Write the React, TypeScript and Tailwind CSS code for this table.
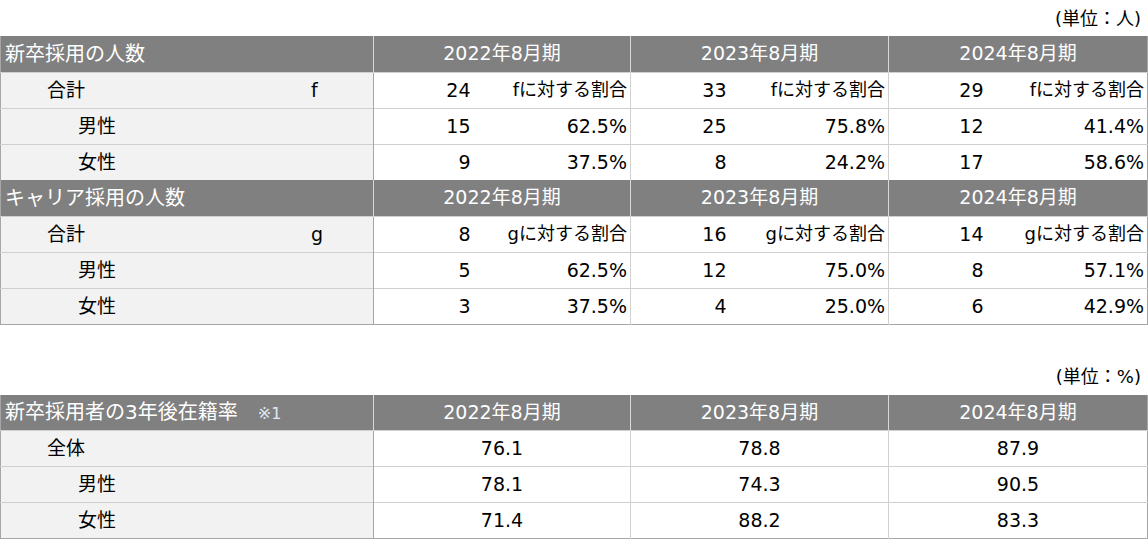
const font = { fontFamily: '"DejaVu Sans", "Noto Sans CJK JP", sans-serif' };

type CountRow = { label: string; indent: "total" | "sub"; mark?: string; values: [string, string][] };

const years = ["2022年8月期", "2023年8月期", "2024年8月期"];

const newGrad: CountRow[] = [
  { label: "合計", indent: "total", mark: "f", values: [["24", "fに対する割合"], ["33", "fに対する割合"], ["29", "fに対する割合"]] },
  { label: "男性", indent: "sub", values: [["15", "62.5%"], ["25", "75.8%"], ["12", "41.4%"]] },
  { label: "女性", indent: "sub", values: [["9", "37.5%"], ["8", "24.2%"], ["17", "58.6%"]] },
];

const career: CountRow[] = [
  { label: "合計", indent: "total", mark: "g", values: [["8", "gに対する割合"], ["16", "gに対する割合"], ["14", "gに対する割合"]] },
  { label: "男性", indent: "sub", values: [["5", "62.5%"], ["12", "75.0%"], ["8", "57.1%"]] },
  { label: "女性", indent: "sub", values: [["3", "37.5%"], ["4", "25.0%"], ["6", "42.9%"]] },
];

const retention = [
  { label: "全体", indent: "total", values: ["76.1", "78.8", "87.9"] },
  { label: "男性", indent: "sub", values: ["78.1", "74.3", "90.5"] },
  { label: "女性", indent: "sub", values: ["71.4", "88.2", "83.3"] },
];

// ─── Pieces ──────────────────────────────────────────────────────────────────

function HeaderRow({ title, note, split }: { title: string; note?: string; split: boolean }) {
  return (
    <tr className="h-9 bg-[#808080] text-white">
      <td className="border-r border-[#d9d9d9] pl-1 text-left whitespace-nowrap text-[20px]">
        {title}
        {note && <span className="ml-[20px] text-[16px] text-[#dfe8f4]">{note}</span>}
      </td>
      {years.map((y, i) => (
        <td
          key={y}
          colSpan={split ? 2 : 1}
          className={`text-center ${i < 2 ? "border-r border-[#d9d9d9]" : ""}`}
        >
          {y}
        </td>
      ))}
    </tr>
  );
}

function LabelCell({ label, indent, mark }: { label: string; indent: string; mark?: string }) {
  return (
    <td className="bg-[#f2f2f2] border-r border-[#a6a6a6] border-t border-t-[#d0d0d0]">
      <div className="flex items-center">
        <span className={indent === "total" ? "pl-[46px] w-[310px]" : "pl-[77px]"}>{label}</span>
        {mark && <span>{mark}</span>}
      </div>
    </td>
  );
}

function CountRows({ rows }: { rows: CountRow[] }) {
  return (
    <>
      {rows.map(r => (
        <tr key={r.label} className="h-9">
          <LabelCell label={r.label} indent={r.indent} mark={r.mark} />
          {r.values.map(([n, p], i) => (
            <>
              <td key={`n${i}`} className="border-t border-[#d0d0d0] text-right pr-[3px]">
                {n}
              </td>
              <td
                key={`p${i}`}
                className={`border-t border-[#d0d0d0] text-right pr-[3px] whitespace-nowrap ${
                  i < 2 ? "border-r" : ""
                } ${p.includes("割合") ? "text-[18px]" : ""}`}
              >
                {p}
              </td>
            </>
          ))}
        </tr>
      ))}
    </>
  );
}

// ─── App ─────────────────────────────────────────────────────────────────────

export default function App() {
  return (
    <div className="w-[1148px] h-[541px] bg-white text-black text-[19px] leading-none" style={font}>
      <div className="h-[36px] flex items-center justify-end pr-[7px] text-[18px] pt-[1px]">(単位：人)</div>
      <table className="w-[1147px] table-fixed border-collapse border-b border-l border-r border-[#a6a6a6]">
        <colgroup>
          <col className="w-[373px]" />
          <col className="w-[100px]" />
          <col className="w-[157px]" />
          <col className="w-[99px]" />
          <col className="w-[159px]" />
          <col className="w-[98px]" />
          <col className="w-[161px]" />
        </colgroup>
        <tbody>
          <HeaderRow title="新卒採用の人数" split />
          <CountRows rows={newGrad} />
          <HeaderRow title="キャリア採用の人数" split />
          <CountRows rows={career} />
        </tbody>
      </table>

      <div className="h-[70px] flex items-end justify-end pr-[7px] pb-[9px] text-[18px]">(単位：%)</div>
      <table className="w-[1147px] table-fixed border-collapse border-b border-l border-r border-[#a6a6a6]">
        <colgroup>
          <col className="w-[373px]" />
          <col className="w-[257px]" />
          <col className="w-[258px]" />
          <col className="w-[259px]" />
        </colgroup>
        <tbody>
          <HeaderRow title="新卒採用者の3年後在籍率" note="※1" split={false} />
          {retention.map(r => (
            <tr key={r.label} className="h-9">
              <LabelCell label={r.label} indent={r.indent} />
              {r.values.map((v, i) => (
                <td
                  key={i}
                  className={`border-t border-[#d0d0d0] text-center ${i < 2 ? "border-r" : ""}`}
                >
                  {v}
                </td>
              ))}
            </tr>
          ))}
        </tbody>
      </table>
    </div>
  );
}
